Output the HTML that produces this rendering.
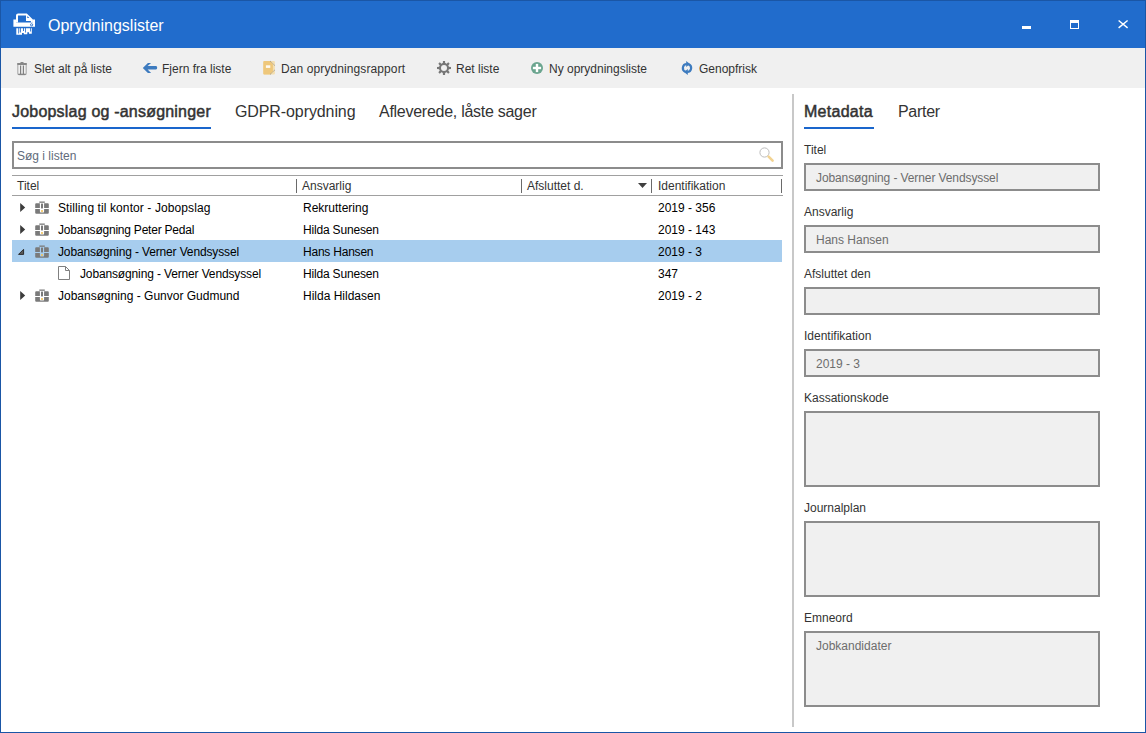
<!DOCTYPE html>
<html><head><meta charset="utf-8">
<style>
html,body{margin:0;padding:0;}
body{width:1146px;height:733px;position:relative;overflow:hidden;background:#fff;font-family:"Liberation Sans",sans-serif;color:#1e1e1e;}
.a{position:absolute;white-space:pre;}
.t12{font-size:12px;line-height:12px;}
.t16{font-size:16px;line-height:16px;}
#win{position:absolute;left:0;top:0;width:1144px;height:731px;border:1px solid #1a56a6;}
#title{position:absolute;left:0;top:0;width:1146px;height:48px;background:#216ccc;}
#tb{position:absolute;left:1px;top:48px;width:1144px;height:40px;background:#f0f0f0;}
.fld{position:absolute;left:804px;width:292px;background:#f0f0f0;border:2px solid #8c8c8c;}
.lbl{color:#333;}
.fv{color:#6d6d6d;}
</style></head><body>
<div id="title"></div>
<div id="tb"></div>
<div id="win"></div>

<!-- title -->
<div class="a t16" style="left:48px;top:18px;color:#fff;">Oprydningslister</div>

<!-- toolbar texts -->
<div class="a t12" style="left:34px;top:63px;color:#333;">Slet alt på liste</div>
<div class="a t12" style="left:162px;top:63px;color:#333;">Fjern fra liste</div>
<div class="a t12" style="left:281px;top:63px;color:#333;letter-spacing:0.1px;">Dan oprydningsrapport</div>
<div class="a t12" style="left:456px;top:63px;color:#333;">Ret liste</div>
<div class="a t12" style="left:549px;top:63px;color:#333;">Ny oprydningsliste</div>
<div class="a t12" style="left:699px;top:63px;color:#333;">Genopfrisk</div>

<!-- left tabs -->
<div class="a t16" style="left:12px;top:104px;color:#333;letter-spacing:0.2px;-webkit-text-stroke:0.5px #333;">Jobopslag og -ansøgninger</div>
<div style="position:absolute;left:12px;top:127px;width:199px;height:2px;background:#1a66cc;"></div>
<div class="a t16" style="left:235px;top:104px;color:#333;letter-spacing:-0.1px;">GDPR-oprydning</div>
<div class="a t16" style="left:379px;top:104px;color:#333;letter-spacing:-0.27px;">Afleverede, låste sager</div>

<!-- search -->
<div style="position:absolute;left:12px;top:141px;width:767px;height:24px;border:2px solid #8c8c8c;background:#fff;"></div>
<div class="a t12" style="left:17px;top:150px;color:#5f6b7b;">Søg i listen</div>

<!-- grid header -->
<div style="position:absolute;left:12px;top:175px;width:771px;height:1px;background:#a0a0a0;"></div>
<div style="position:absolute;left:12px;top:195px;width:771px;height:1px;background:#a0a0a0;"></div>
<div class="a t12" style="left:17px;top:180px;color:#333;">Titel</div>
<div class="a t12" style="left:302px;top:180px;color:#333;">Ansvarlig</div>
<div class="a t12" style="left:527px;top:180px;color:#333;">Afsluttet d.</div>
<div class="a t12" style="left:658px;top:180px;color:#333;">Identifikation</div>

<!-- rows -->
<div style="position:absolute;left:12px;top:240px;width:770px;height:22px;background:#a7cdee;"></div>
<div class="a t12" style="left:58px;top:202px;color:#000;letter-spacing:0.1px;">Stilling til kontor - Jobopslag</div>
<div class="a t12" style="left:303px;top:202px;color:#000;">Rekruttering</div>
<div class="a t12" style="left:658px;top:202px;color:#000;">2019 - 356</div>

<div class="a t12" style="left:58px;top:224px;color:#000;letter-spacing:-0.22px;">Jobansøgning Peter Pedal</div>
<div class="a t12" style="left:303px;top:224px;color:#000;letter-spacing:-0.18px;">Hilda Sunesen</div>
<div class="a t12" style="left:658px;top:224px;color:#000;">2019 - 143</div>

<div class="a t12" style="left:58px;top:246px;color:#000;letter-spacing:-0.14px;">Jobansøgning - Verner Vendsyssel</div>
<div class="a t12" style="left:303px;top:246px;color:#000;letter-spacing:-0.22px;">Hans Hansen</div>
<div class="a t12" style="left:658px;top:246px;color:#000;">2019 - 3</div>

<div class="a t12" style="left:80px;top:268px;color:#000;letter-spacing:-0.14px;">Jobansøgning - Verner Vendsyssel</div>
<div class="a t12" style="left:303px;top:268px;color:#000;letter-spacing:-0.18px;">Hilda Sunesen</div>
<div class="a t12" style="left:658px;top:268px;color:#000;">347</div>

<div class="a t12" style="left:58px;top:290px;color:#000;">Jobansøgning - Gunvor Gudmund</div>
<div class="a t12" style="left:303px;top:290px;color:#000;">Hilda Hildasen</div>
<div class="a t12" style="left:658px;top:290px;color:#000;">2019 - 2</div>

<!-- splitter -->
<div style="position:absolute;left:792px;top:94px;width:2px;height:633px;background:#c8c8c8;"></div>

<!-- right tabs -->
<div class="a t16" style="left:804px;top:104px;color:#333;letter-spacing:0.28px;-webkit-text-stroke:0.5px #333;">Metadata</div>
<div style="position:absolute;left:804px;top:127px;width:70px;height:2px;background:#1a66cc;"></div>
<div class="a t16" style="left:898px;top:104px;color:#333;letter-spacing:-0.3px;">Parter</div>

<!-- fields -->
<div class="a t12 lbl" style="left:804px;top:144px;">Titel</div>
<div class="fld" style="top:163px;height:24px;"></div>
<div class="a t12 fv" style="left:816px;top:172px;letter-spacing:-0.1px;">Jobansøgning - Verner Vendsyssel</div>

<div class="a t12 lbl" style="left:804px;top:206px;">Ansvarlig</div>
<div class="fld" style="top:225px;height:24px;"></div>
<div class="a t12 fv" style="left:816px;top:234px;">Hans Hansen</div>

<div class="a t12 lbl" style="left:804px;top:268px;">Afsluttet den</div>
<div class="fld" style="top:287px;height:24px;"></div>

<div class="a t12 lbl" style="left:804px;top:330px;">Identifikation</div>
<div class="fld" style="top:349px;height:24px;"></div>
<div class="a t12 fv" style="left:816px;top:358px;">2019 - 3</div>

<div class="a t12 lbl" style="left:804px;top:392px;">Kassationskode</div>
<div class="fld" style="top:411px;height:72px;"></div>

<div class="a t12 lbl" style="left:804px;top:502px;">Journalplan</div>
<div class="fld" style="top:521px;height:72px;"></div>

<div class="a t12 lbl" style="left:804px;top:612px;">Emneord</div>
<div class="fld" style="top:631px;height:72px;"></div>
<div class="a t12 fv" style="left:816px;top:640px;">Jobkandidater</div>


<!-- title icon -->
<svg style="position:absolute;left:13px;top:13px;" width="23" height="23" viewBox="0 0 23 23">
 <path d="M4,9.5 V2.6 Q4,1.5 5.1,1.5 H13.4 L18.9,7 V9.5" fill="none" stroke="#fff" stroke-width="2"/>
 <path d="M13,1 L19.4,7.4 V8 H13 Z" fill="#fff"/>
 <path d="M14.3,3.1 L16.3,5 H14.3 Z" fill="#216ccc"/>
 <path d="M0.4,6.6 H3 V9.6 H19.8 V6.6 H22 V13.8 H0.4 Z" fill="#fff"/>
 <circle cx="18.6" cy="11.8" r="1.1" fill="none" stroke="#216ccc" stroke-width="0.9"/>
 <path d="M3.3,15.2 H18.8 V20.7 H16 V19.3 H14.3 V21.3 H10.8 V20 H9 V21.8 H3.3 Z" fill="#fff"/>
 <path d="M5.2,15 H5.9 V20.4 H5.2 Z M6.8,15 H7.8 V19.5 H6.8 Z M10.1,15 H11 V17.9 H10.1 Z M12.2,15 H13 V19.5 H12.2 Z M17,15 H17.8 V18.6 H17 Z" fill="#216ccc"/>
</svg>
<!-- window buttons -->
<div style="position:absolute;left:1022px;top:26px;width:9px;height:3px;background:#fff;"></div>
<div style="position:absolute;left:1070px;top:20px;width:7px;height:5px;border:1px solid #fff;border-top:3px solid #fff;"></div>
<svg style="position:absolute;left:1117px;top:19px;" width="12" height="11" viewBox="0 0 12 11">
 <path d="M1.6,1.5 L10.6,8.9 M10.6,1.5 L1.6,8.9" stroke="#fff" stroke-width="1.4"/>
</svg>

<!-- toolbar icons -->
<svg style="position:absolute;left:16px;top:61px;" width="12" height="15" viewBox="0 0 12 15">
 <rect x="4.5" y="1" width="3" height="1.2" fill="#888"/>
 <rect x="1" y="2" width="10" height="2" rx="0.8" fill="#888"/>
 <path d="M1.8,4 V12.6 Q1.8,13.8 3,13.8 H9 Q10.2,13.8 10.2,12.6 V4" fill="none" stroke="#aaa" stroke-width="1.1"/>
 <path d="M4.6,4.5 V13 M7.4,4.5 V13" stroke="#808080" stroke-width="1.2"/>
 <path d="M2.3,13.3 H9.7" stroke="#808080" stroke-width="1.2"/>
</svg>
<svg style="position:absolute;left:142px;top:62px;" width="16" height="12" viewBox="0 0 16 12">
 <path d="M0.8,5.9 L5.9,1 H9.1 L5.6,4.1 H14 Q15.2,4.1 15.2,5.85 Q15.2,7.6 14,7.6 H5.6 L9.1,10.9 H5.9 Z" fill="#3d7bbf"/>
</svg>
<svg style="position:absolute;left:262px;top:60px;" width="15" height="16" viewBox="0 0 15 16">
 <rect x="1.3" y="1.1" width="11.6" height="13.3" rx="1" fill="#f4dfb0"/>
 <path d="M2.3,1.1 H8.2 L10.9,4 V11.5 L8.2,14.4 H2.3 Q1.3,14.4 1.3,13.4 V2.1 Q1.3,1.1 2.3,1.1 Z" fill="#eec77b"/>
 <path d="M8.2,1.1 L12.9,5.6 M8.2,14.4 L12.9,9.9" stroke="#8a8a8a" stroke-width="0.8" stroke-dasharray="1.1,0.7"/>
 <rect x="3.9" y="5.3" width="4.4" height="2.6" fill="#fff" opacity="0.9"/>
</svg>
<svg style="position:absolute;left:436px;top:60px;" width="16" height="16" viewBox="0 0 16 16">
 <path d="M6.80,3.50 L6.95,1.00 L9.05,1.00 L9.20,3.50 L10.33,3.97 L12.21,2.31 L13.69,3.79 L12.03,5.67 L12.50,6.80 L15.00,6.95 L15.00,9.05 L12.50,9.20 L12.03,10.33 L13.69,12.21 L12.21,13.69 L10.33,12.03 L9.20,12.50 L9.05,15.00 L6.95,15.00 L6.80,12.50 L5.67,12.03 L3.79,13.69 L2.31,12.21 L3.97,10.33 L3.50,9.20 L1.00,9.05 L1.00,6.95 L3.50,6.80 L3.97,5.67 L2.31,3.79 L3.79,2.31 L5.67,3.97Z" fill="#777"/><circle cx="8" cy="8" r="4.9" fill="#777"/>
 <circle cx="8" cy="8" r="3" fill="#f0f0f0"/>
</svg>
<svg style="position:absolute;left:530px;top:61px;" width="14" height="14" viewBox="0 0 14 14">
 <circle cx="7" cy="7" r="6" fill="#6ba58f"/>
 <rect x="2.9" y="5.8" width="8.2" height="2.4" fill="#fff"/>
 <rect x="5.8" y="2.9" width="2.4" height="8.2" fill="#fff"/>
</svg>
<svg style="position:absolute;left:680px;top:60px;" width="14" height="16" viewBox="0 0 14 16">
 <path d="M5.6,11.8 A4,4 0 0 1 6.8,4" fill="none" stroke="#3d7bbf" stroke-width="2.2"/>
 <path d="M6.2,1 L10,4 L6.2,7 Z" fill="#3d7bbf"/>
 <path d="M8.4,4.2 A4,4 0 0 1 7.2,12" fill="none" stroke="#3d7bbf" stroke-width="2.2"/>
 <path d="M7.8,9 L4,12 L7.8,15 Z" fill="#3d7bbf"/>
</svg>

<!-- magnifier -->
<svg style="position:absolute;left:756px;top:144px;" width="20" height="20" viewBox="0 0 20 20">
 <circle cx="8.5" cy="8.5" r="4.6" fill="none" stroke="#bdbdbd" stroke-width="1"/>
 <path d="M12.6,12.6 L16.6,16.6" stroke="#f2d392" stroke-width="2.6" stroke-linecap="round"/>
</svg>

<!-- header separators -->
<div style="position:absolute;left:296px;top:179px;width:1px;height:14px;background:#6a6a6a;"></div>
<div style="position:absolute;left:521px;top:179px;width:1px;height:14px;background:#6a6a6a;"></div>
<div style="position:absolute;left:651px;top:179px;width:1px;height:14px;background:#6a6a6a;"></div>
<div style="position:absolute;left:781px;top:179px;width:1px;height:14px;background:#6a6a6a;"></div>
<svg style="position:absolute;left:637px;top:182px;" width="11" height="7" viewBox="0 0 11 7">
 <path d="M1,1 H10 L5.5,6 Z" fill="#404040"/>
</svg>
<svg style="position:absolute;left:57px;top:265px;" width="14" height="16" viewBox="0 0 14 16">
 <path d="M1.5,1.5 H8.5 L12.5,5.5 V14.5 H1.5 Z" fill="#fff" stroke="#808080" stroke-width="1"/>
 <path d="M8.5,1.5 V5.5 H12.5" fill="none" stroke="#808080" stroke-width="1"/>
</svg>
<svg style="position:absolute;left:19px;top:202px;" width="8" height="11" viewBox="0 0 8 11">
 <path d="M1.2,1 L6.2,5.5 L1.2,10 Z" fill="#3c3c3c"/>
</svg>
<svg style="position:absolute;left:34px;top:201px;" width="16" height="14" viewBox="0 0 16 14">
 <path d="M5.3,0.5 H10.8 V1.8 H5.3 Z" fill="#7a7a7a"/>
 <path fill-rule="evenodd" fill="#7a7a7a" d="M1.2,3.2 Q1.2,2.2 2.2,2.2 H13.8 Q14.8,2.2 14.8,3.2 V6.9 H1.2 Z M5.9,2.2 H10.1 V6.9 H5.9 Z"/>
 <path fill-rule="evenodd" fill="#7a7a7a" d="M1.2,8.1 H14.8 V11.8 Q14.8,12.8 13.8,12.8 H2.2 Q1.2,12.8 1.2,11.8 Z M5.9,8.1 H10.1 V10.4 Q10.1,11.6 8.9,11.6 H7.1 Q5.9,11.6 5.9,10.4 Z"/>
 <rect x="7" y="2.6" width="2" height="4.8" fill="#7a7a7a"/>
 <circle cx="8" cy="10" r="1.1" fill="#f2c25a"/>
</svg>
<svg style="position:absolute;left:19px;top:224px;" width="8" height="11" viewBox="0 0 8 11">
 <path d="M1.2,1 L6.2,5.5 L1.2,10 Z" fill="#3c3c3c"/>
</svg>
<svg style="position:absolute;left:34px;top:223px;" width="16" height="14" viewBox="0 0 16 14">
 <path d="M5.3,0.5 H10.8 V1.8 H5.3 Z" fill="#7a7a7a"/>
 <path fill-rule="evenodd" fill="#7a7a7a" d="M1.2,3.2 Q1.2,2.2 2.2,2.2 H13.8 Q14.8,2.2 14.8,3.2 V6.9 H1.2 Z M5.9,2.2 H10.1 V6.9 H5.9 Z"/>
 <path fill-rule="evenodd" fill="#7a7a7a" d="M1.2,8.1 H14.8 V11.8 Q14.8,12.8 13.8,12.8 H2.2 Q1.2,12.8 1.2,11.8 Z M5.9,8.1 H10.1 V10.4 Q10.1,11.6 8.9,11.6 H7.1 Q5.9,11.6 5.9,10.4 Z"/>
 <rect x="7" y="2.6" width="2" height="4.8" fill="#7a7a7a"/>
 <circle cx="8" cy="10" r="1.1" fill="#f2c25a"/>
</svg>
<svg style="position:absolute;left:16px;top:247px;" width="10" height="10" viewBox="0 0 10 10">
 <path d="M7.6,2.3 V7.4 H2.5 Z" fill="#5a5a5a" stroke="#222" stroke-width="0.9" stroke-linejoin="round"/>
</svg>
<svg style="position:absolute;left:34px;top:245px;" width="16" height="14" viewBox="0 0 16 14">
 <path d="M5.3,0.5 H10.8 V1.8 H5.3 Z" fill="#7a7a7a"/>
 <path fill-rule="evenodd" fill="#7a7a7a" d="M1.2,3.2 Q1.2,2.2 2.2,2.2 H13.8 Q14.8,2.2 14.8,3.2 V6.9 H1.2 Z M5.9,2.2 H10.1 V6.9 H5.9 Z"/>
 <path fill-rule="evenodd" fill="#7a7a7a" d="M1.2,8.1 H14.8 V11.8 Q14.8,12.8 13.8,12.8 H2.2 Q1.2,12.8 1.2,11.8 Z M5.9,8.1 H10.1 V10.4 Q10.1,11.6 8.9,11.6 H7.1 Q5.9,11.6 5.9,10.4 Z"/>
 <rect x="7" y="2.6" width="2" height="4.8" fill="#7a7a7a"/>
 <circle cx="8" cy="10" r="1.1" fill="#f2c25a"/>
</svg>
<svg style="position:absolute;left:19px;top:290px;" width="8" height="11" viewBox="0 0 8 11">
 <path d="M1.2,1 L6.2,5.5 L1.2,10 Z" fill="#3c3c3c"/>
</svg>
<svg style="position:absolute;left:34px;top:289px;" width="16" height="14" viewBox="0 0 16 14">
 <path d="M5.3,0.5 H10.8 V1.8 H5.3 Z" fill="#7a7a7a"/>
 <path fill-rule="evenodd" fill="#7a7a7a" d="M1.2,3.2 Q1.2,2.2 2.2,2.2 H13.8 Q14.8,2.2 14.8,3.2 V6.9 H1.2 Z M5.9,2.2 H10.1 V6.9 H5.9 Z"/>
 <path fill-rule="evenodd" fill="#7a7a7a" d="M1.2,8.1 H14.8 V11.8 Q14.8,12.8 13.8,12.8 H2.2 Q1.2,12.8 1.2,11.8 Z M5.9,8.1 H10.1 V10.4 Q10.1,11.6 8.9,11.6 H7.1 Q5.9,11.6 5.9,10.4 Z"/>
 <rect x="7" y="2.6" width="2" height="4.8" fill="#7a7a7a"/>
 <circle cx="8" cy="10" r="1.1" fill="#f2c25a"/>
</svg>
</body></html>
